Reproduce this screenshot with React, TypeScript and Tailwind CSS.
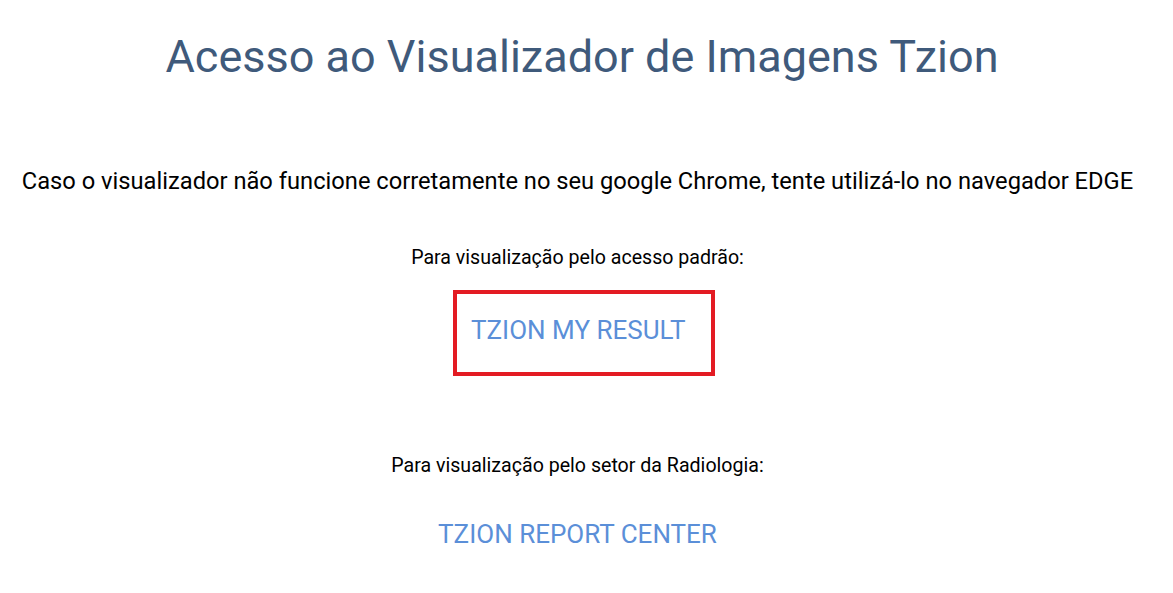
export default function App() {
  return (
    <div className="min-h-[593px] bg-white pr-[18px] font-['Roboto',sans-serif]">
      <div className="flex flex-col items-center text-center">
        <h1 className="mt-[29px] ml-[9px] text-[45px] font-normal leading-[56px] text-[#3f5a7b]">
          Acesso ao Visualizador de Imagens Tzion
        </h1>
        <p className="mt-[82px] whitespace-nowrap text-[23.7px] leading-[28px] text-black">
          Caso o visualizador não funcione corretamente no seu google Chrome, tente utilizá-lo no navegador EDGE
        </p>
        <p className="mt-[51px] text-[19.6px] leading-[24px] text-black">Para visualização pelo acesso padrão:</p>
        <div className="ml-[13px] mt-[20px] flex h-[86px] w-[262px] items-start border-[4px] border-[#e31b23] pl-[14px] pt-[20px]">
          <a href="#" className="text-[26px] leading-[32px] text-[#5b8fd8]">TZION MY RESULT</a>
        </div>
        <p className="mt-[78px] text-[19.6px] leading-[24px] text-black">Para visualização pelo setor da Radiologia:</p>
        <a href="#" className="mt-[40px] text-[26px] leading-[32px] text-[#5b8fd8]">TZION REPORT CENTER</a>
      </div>
    </div>
  );
}
